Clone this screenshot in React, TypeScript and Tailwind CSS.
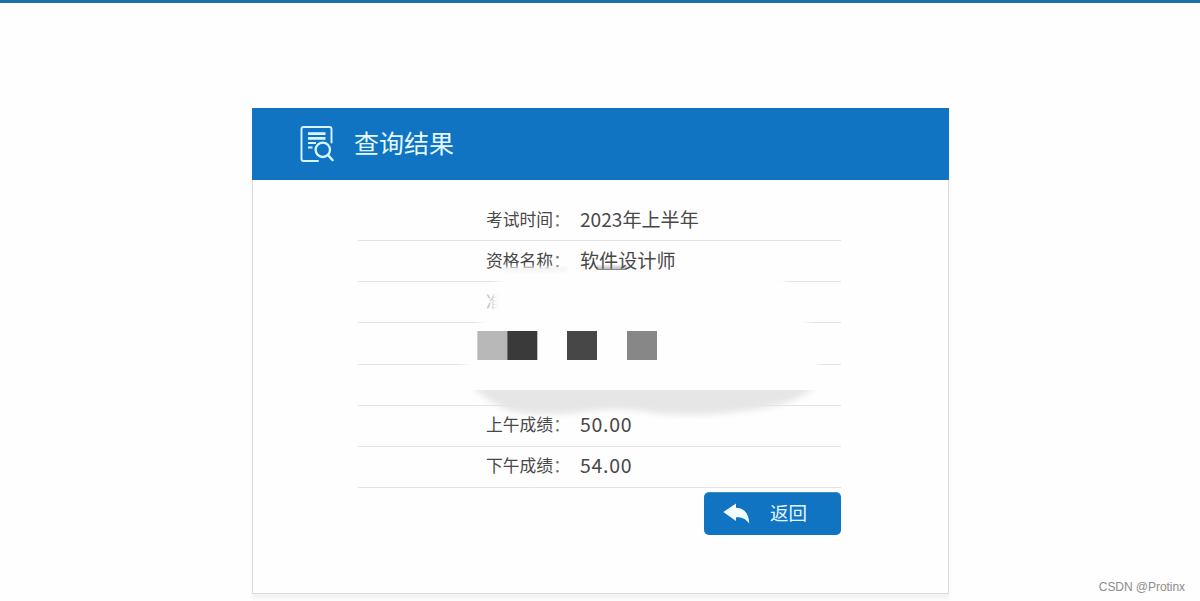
import React from "react";

const rows = [
  { label: "考试时间", value: "2023年上半年" },
  { label: "资格名称", value: "软件设计师" },
  { label: "准", value: "" },
  { label: "", value: "" },
  { label: "", value: "" },
  { label: "上午成绩", value: "50.00" },
  { label: "下午成绩", value: "54.00" },
];

const SearchDocIcon = () => (
  <svg
    width="36"
    height="38"
    viewBox="0 0 36 38"
    fill="none"
    stroke="#d8f6ff"
    strokeWidth="1.9"
    strokeLinecap="round"
  >
    <path d="M18 36H3.5Q1.5 36 1.5 34V4Q1.5 2 3.5 2H29.5Q31.5 2 31.5 4V17.5" />
    <path d="M8 8.7H25.5M8 13.4H25.5" strokeWidth="2.7" strokeLinecap="butt" />
    <path d="M8 18H16M8 22.5H12.5" strokeWidth="2.1" strokeLinecap="butt" />
    <circle cx="22.8" cy="24.8" r="7.2" strokeWidth="2.3" />
    <path d="M28 30.2L32.5 35" strokeWidth="2.5" />
  </svg>
);

const ReplyIcon = () => (
  <svg width="27" height="21" viewBox="0 0 27 21" fill="#f2fcff">
    <path d="M0.3 9L13 0.5V4.8C20.5 5 26 10 26.2 20.4C23 16 19.5 14.2 13 14.2V18Z" />
  </svg>
);

// Eraser strokes and mosaic blocks that hide the private rows
const EraserMask = () => (
  <svg
    className="absolute left-0 top-0"
    width="483"
    height="289"
    viewBox="358 200 483 289"
  >
    <defs>
      <filter id="soft" x="-10%" y="-10%" width="120%" height="120%">
        <feGaussianBlur stdDeviation="3" />
      </filter>
      <filter id="smudge" x="-10%" y="-100%" width="120%" height="300%">
        <feGaussianBlur stdDeviation="1.5" />
      </filter>
      <clipPath id="below">
        <rect x="358" y="390" width="483" height="60" />
      </clipPath>
      <clipPath id="above">
        <rect x="358" y="262" width="483" height="128" />
      </clipPath>
      <linearGradient id="smear" x1="0" y1="0" x2="0" y2="1">
        <stop offset="0" stopColor="#777777" stopOpacity="0" />
        <stop offset="1" stopColor="#777777" stopOpacity="0.6" />
      </linearGradient>
    </defs>
    <g clipPath="url(#above)">
      <path
        d="M507 275H782L806 316L819 363V400H464V363L478 323L493 312V285Z"
        fill="#fefefe"
        filter="url(#soft)"
      />
    </g>
    <g clipPath="url(#below)">
      <path
        d="M470 384H818Q800 402 765 408Q730 414 692 415Q660 415 642 411Q615 407 583 412Q540 417 510 411Q488 403 470 384Z"
        fill="#e6e6e6"
        filter="url(#soft)"
      />
    </g>
    <rect x="503" y="267" width="64" height="5" fill="#f5f5f5" filter="url(#smudge)" />
    <rect x="597" y="264" width="30" height="6" fill="url(#smear)" />
    <rect x="597" y="269" width="30" height="1" fill="#888" />
    <rect x="477.3" y="331" width="30" height="29" fill="#b8b8b8" />
    <rect x="507.3" y="331" width="30" height="29" fill="#3a3a3a" />
    <rect x="567" y="331" width="30" height="29" fill="#474747" />
    <rect x="627" y="331" width="30" height="29" fill="#878787" />
  </svg>
);

const Row = ({ label, value }: { label: string; value: string }) => {
  const score = value.includes(".");
  return (
    <div className="flex h-[41.15px] items-center border-b border-[#e3e3e3] pb-[3px] pl-32">
      <div
        className={`flex w-[94px] whitespace-nowrap text-[16.8px] leading-6 ${
          label === "准" ? "text-[#bbb]" : "text-[#484848]"
        }`}
      >
        {label}
        {value && <span className="text-[#777]">：</span>}
      </div>
      <div
        className={`whitespace-nowrap leading-6 text-[#484848] ${
          score ? "text-[19.5px] tracking-[0.7px]" : "text-[19.1px]"
        }`}
      >
        {value}
      </div>
    </div>
  );
};

const App = () => {
  return (
    <div className="relative h-[601px] overflow-hidden border-t-[3px] border-[#1b70ad] bg-[#fefefe] pt-[105px] font-['Noto_Sans_CJK_SC',sans-serif]">
      <div className="ml-[252px] h-[486px] w-[697px] border border-t-0 border-[#dcdcdc] bg-[#fefefe] shadow-[0_5px_3px_#f3f3f3]">
        <div className="-mx-px flex h-[72px] items-center bg-[#1074c2] pl-12">
          <SearchDocIcon />
          <div className="ml-[18px] pb-[5px] text-[25px] leading-9 text-[#e5faff]">
            查询结果
          </div>
        </div>
        <div className="relative ml-[105px] mt-5 w-[483px]">
          {rows.map((row, i) => (
            <Row key={i} label={row.label} value={row.value} />
          ))}
          <EraserMask />
        </div>
        <div className="ml-[105px] mt-1 flex w-[483px] justify-end">
          <button className="flex h-[43px] w-[137px] items-center rounded-[5px] border-t border-[#3d8fc4] bg-[#1074c2] pl-[19px] text-[18.5px] text-[#e5faff]">
            <ReplyIcon />
            <span className="ml-5 pb-0.5">返回</span>
          </button>
        </div>
      </div>
      <div className="absolute bottom-[6px] right-[15px] font-['Liberation_Sans',sans-serif] text-[12px] leading-4 tracking-[-0.05px] text-[#8c8c8c]">
        CSDN @Protinx
      </div>
    </div>
  );
};

export default App;
